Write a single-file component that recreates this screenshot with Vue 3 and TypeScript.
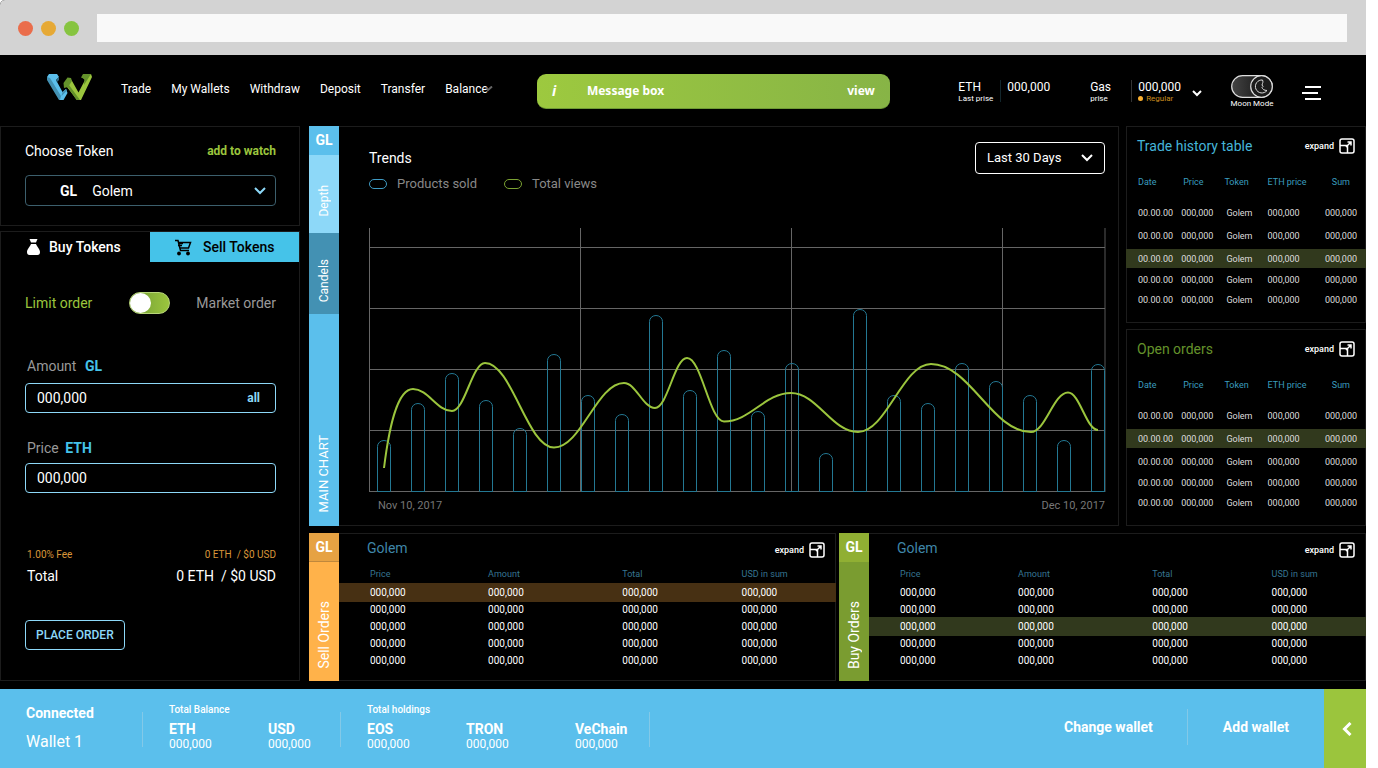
<script setup lang="ts">
import { computed, ref } from 'vue'

type Point = [number, number]

const links = ['Trade', 'My Wallets', 'Withdraw', 'Deposit', 'Transfer']
const moonMode = ref(true)
const marketOrder = ref(false)
const token = ref('Golem')
const period = ref('Last 30 Days')
const amount = ref('000,000')
const price = ref('000,000')

const barTops = [212, 175, 145, 172, 200, 126, 167, 186, 87, 162, 122, 183, 135, 225, 81, 167, 175, 135, 153, 167, 212, 136]
const barPath = (top: number, i: number): string => {
  const x = 8.5 + i * 34
  return `M${x} 263.5V${top + 6.5}A6.5 6 0 0 1 ${x + 13} ${top + 6.5}V263.5Z`
}
const gridX = [0.5, 211.5, 422.5, 633.5]
const gridY = [19.5, 80.5, 141.5, 202.5, 263.5]

const views: Point[] = [
  [44, 161], [83, 183], [116, 135], [185, 219.5], [255, 155], [286, 180], [318, 130],
  [355, 193.5], [422, 165], [489, 204], [562, 136], [662, 204], [699, 164.5], [729, 202],
]
const viewsPath = computed(() => {
  let d = 'M15 240C20 200 28 161 44 161'
  for (let i = 1; i < views.length; i++) {
    const [x0, y0] = views[i - 1]
    const [x1, y1] = views[i]
    const k = (x1 - x0) * 0.39
    d += `C${x0 + k} ${y0} ${x1 - k} ${y1} ${x1} ${y1}`
  }
  return d
})

const historyPanels = [
  { title: 'Trade history table', tone: 'cyan', active: 2 },
  { title: 'Open orders', tone: 'green', active: 1 },
]
const historyHeads = ['Date', 'Price', 'Token', 'ETH price', 'Sum']
const historyRow = ['00.00.00', '000,000', 'Golem', '000,000', '000,000']

const orderPanels = [
  { name: 'Sell Orders', kind: 'sell', active: 0 },
  { name: 'Buy Orders', kind: 'buy', active: 2 },
]
const orderHeads = ['Price', 'Amount', 'Total', 'USD in sum']
</script>

<template>
  <div class="app">
    <div class="chrome">
      <i class="dot red"></i><i class="dot amber"></i><i class="dot lime"></i>
      <input class="address" type="text" aria-label="Address" />
    </div>

    <header class="header">
      <a class="logo" href="#" aria-label="Home">
        <svg width="46" height="28" viewBox="0 0 46 28">
          <path d="M0 3L2 0H10L12 3L9 6L15.500 18L19 15L20.500 19L16.500 26H13Z" fill="#5bbfec" />
          <path d="M0 3L3 4L14 22L13 26H12L0 6ZM15.500 18L19 15L20 16.500L14.500 22Z" fill="#4391b3" />
          <path d="M9 6L12 3L12 6L10 8Z" fill="#2f6a85" />
          <path d="M20 13L24.500 6L31.500 18.500L38 6L36 4L44 0L45 3L34 26H30Z" fill="#9bc53d" />
          <path d="M16.500 9L20.500 3.500L24 4L25 7L21 13L17 14ZM20 12L22 11L33 26H29.500ZM34 3.500L36 0H44L37 11L37.500 5Z" fill="#64922b" />
        </svg>
      </a>
      <nav class="nav">
        <a v-for="l in links" :key="l" href="#">{{ l }}</a>
        <a class="balance" href="#">Balance<svg width="8" height="6" viewBox="0 0 8 6"><path d="M1 1.5L3 4L7 .5" /></svg></a>
      </nav>
      <div class="message">
        <span class="info">i</span>
        <span class="message-text">Message box</span>
        <button type="button">view</button>
      </div>
      <div class="status">
        <div class="quote first"><span>ETH</span><small>Last prise</small></div>
        <div class="quote value teal"><span>000,000</span></div>
        <div class="quote gas"><span>Gas</span><small>prise</small></div>
        <div class="quote value"><span>000,000</span><small class="regular"><i></i>Regular</small></div>
        <button class="more" type="button" aria-label="Gas options">
          <svg width="10" height="8" viewBox="0 0 10 8"><path d="M1 2L5 6L9 2" /></svg>
        </button>
        <label class="moon">
          <input v-model="moonMode" type="checkbox" />
          <svg width="42" height="23" viewBox="0 0 42 23">
            <defs><linearGradient id="moonTrack"><stop offset="0" stop-color="#444" /><stop offset="1" stop-color="#0a0a0a" /></linearGradient></defs>
            <rect x=".7" y=".7" width="40.6" height="21.6" rx="10.8" fill="url(#moonTrack)" stroke="#ddd" stroke-width="1.2" />
            <circle cx="30.5" cy="11.5" r="10.8" fill="#1c1c1c" stroke="#ddd" stroke-width="1.2" />
            <path d="M31.500 5A6.500 6.500 0 1 0 36 15.500C33 15.500 31.500 14 31 12.500L32 11.500L31 10C31.500 8 32.500 7 31.500 5Z" fill="none" stroke="#ddd" />
          </svg>
          <span>Moon Mode</span>
        </label>
        <button class="menu" type="button" aria-label="Menu">
          <svg width="20" height="16" viewBox="0 0 20 16"><path d="M3 2H19M0 8H16M3 14H19" /></svg>
        </button>
      </div>
    </header>

    <main class="main">
      <aside class="side">
        <section class="panel choose">
          <div class="row">
            <label for="token">Choose Token</label>
            <a class="watch" href="#">add to watch</a>
          </div>
          <div class="token-box">
            <b>GL</b>
            <select id="token" v-model="token"><option>Golem</option></select>
            <svg width="12" height="8" viewBox="0 0 12 8"><path d="M1 1L6 6L11 1" /></svg>
          </div>
        </section>

        <section class="panel trade">
          <div class="trade-tabs">
            <button type="button">
              <svg width="15" height="17" viewBox="0 0 15 17">
                <path d="M3.500 0H11.500L10 3.500H5Z" fill="#fff" />
                <path d="M5 5H10C11 8 14 10 14 13Q14 16 11.500 16H3.500Q1 16 1 13C1 10 4 8 5 5Z" fill="#fff" />
              </svg>Buy Tokens
            </button>
            <button class="sell-tab" type="button">
              <svg width="17" height="17" viewBox="0 0 17 17">
                <path d="M0 1.500H3L5.500 11.500H14M4 3.500H15.500L13.500 9H5.500M3 4.500H8M3 6.500H7" fill="none" stroke="#000" stroke-width="1.500" />
                <circle cx="4" cy="14.500" r="1.900" /><circle cx="13" cy="14.500" r="1.900" />
              </svg>Sell Tokens
            </button>
          </div>
          <div class="trade-body">
            <div class="row order-type">
              <span class="limit">Limit order</span>
              <label class="switch"><input v-model="marketOrder" type="checkbox" aria-label="Market order" /><i></i></label>
              <span class="market">Market order</span>
            </div>
            <label class="field-label" for="amount">Amount <b class="wide">GL</b></label>
            <div class="field">
              <input id="amount" v-model="amount" type="text" />
              <button type="button">all</button>
            </div>
            <label class="field-label second" for="price">Price <b>ETH</b></label>
            <div class="field"><input id="price" v-model="price" type="text" /></div>
            <div class="row fee"><span>1.00% Fee</span><span>0 ETH&nbsp; / $0 USD</span></div>
            <div class="row total"><span>Total</span><span>0 ETH&nbsp; / $0 USD</span></div>
            <button class="place" type="button">PLACE ORDER</button>
          </div>
        </section>
      </aside>

      <div class="content">
        <div class="upper">
          <section class="chart">
            <div class="strip">
              <b class="badge">GL</b>
              <button class="depth" type="button"><span>Depth</span></button>
              <button class="candels" type="button"><span>Candels</span></button>
              <button class="main-chart" type="button"><span>MAIN CHART</span></button>
            </div>
            <div class="chart-body">
              <div class="row chart-top">
                <div>
                  <h2>Trends</h2>
                  <div class="legend">
                    <span><i></i>Products sold</span>
                    <span class="views"><i></i>Total views</span>
                  </div>
                </div>
                <div class="period">
                  <select v-model="period" aria-label="Period"><option>Last 30 Days</option></select>
                  <svg width="12" height="8" viewBox="0 0 12 8"><path d="M1 1L6 6L11 1" /></svg>
                </div>
              </div>
              <svg class="plot" viewBox="0 0 737 264" role="img" aria-label="Trends chart">
                <path d="M736 0V264" stroke="#2b2b2b" stroke-width="2" />
                <g stroke="#666">
                  <path v-for="x in gridX" :key="'x' + x" :d="`M${x} 0V264`" />
                  <path v-for="y in gridY" :key="'y' + y" :d="`M0 ${y}H736`" />
                </g>
                <g fill="none" stroke="#237893">
                  <path v-for="(t, i) in barTops" :key="i" :d="barPath(t, i)" />
                </g>
                <path :d="viewsPath" fill="none" stroke="#9bc53d" stroke-width="2" />
              </svg>
              <div class="row dates"><span>Nov 10, 2017</span><span>Dec 10, 2017</span></div>
            </div>
          </section>

          <div class="history">
            <section v-for="p in historyPanels" :key="p.title" class="panel history-panel">
              <div class="row history-head">
                <h2 :class="p.tone">{{ p.title }}</h2>
                <button class="expand" type="button">expand
                  <svg width="16" height="16" viewBox="0 0 16 16"><rect x="1" y="1" width="14" height="14" rx="2" /><path d="M1 7.500H8.500V15M7 9L12 4M8.500 4H12V7.500" /></svg>
                </button>
              </div>
              <table class="history-table">
                <thead><tr><th v-for="h in historyHeads" :key="h">{{ h }}</th></tr></thead>
                <tbody>
                  <tr v-for="n in 5" :key="n" :class="{ active: n - 1 === p.active }">
                    <td v-for="(c, i) in historyRow" :key="i">{{ c }}</td>
                  </tr>
                </tbody>
              </table>
            </section>
          </div>
        </div>

        <div class="lower">
          <section v-for="p in orderPanels" :key="p.name" class="orders" :class="p.kind">
            <div class="strip">
              <b class="badge">GL</b>
              <div class="orders-name"><span>{{ p.name }}</span></div>
            </div>
            <div class="orders-body">
              <div class="row orders-head">
                <h2>Golem</h2>
                <button class="expand" type="button">expand
                  <svg width="16" height="16" viewBox="0 0 16 16"><rect x="1" y="1" width="14" height="14" rx="2" /><path d="M1 7.500H8.500V15M7 9L12 4M8.500 4H12V7.500" /></svg>
                </button>
              </div>
              <table class="orders-table">
                <thead><tr><th v-for="h in orderHeads" :key="h">{{ h }}</th></tr></thead>
                <tbody>
                  <tr v-for="n in 5" :key="n" :class="{ active: n - 1 === p.active }">
                    <td v-for="h in orderHeads" :key="h">000,000</td>
                  </tr>
                </tbody>
              </table>
            </div>
          </section>
        </div>
      </div>
    </main>

    <footer class="footer">
      <div class="wallet"><b>Connected</b><span>Wallet 1</span></div>
      <div class="sum balance-sum">
        <h3>Total Balance</h3>
        <dl>
          <div><dt>ETH</dt><dd>000,000</dd></div>
          <div><dt>USD</dt><dd>000,000</dd></div>
        </dl>
      </div>
      <div class="sum holdings">
        <h3>Total holdings</h3>
        <dl>
          <div><dt>EOS</dt><dd>000,000</dd></div>
          <div><dt>TRON</dt><dd>000,000</dd></div>
          <div><dt>VeChain</dt><dd>000,000</dd></div>
        </dl>
      </div>
      <div class="actions">
        <a href="#">Change wallet</a>
        <a href="#">Add wallet</a>
      </div>
      <button class="collapse" type="button" aria-label="Collapse">
        <svg width="10" height="14" viewBox="0 0 10 14"><path d="M8.500 1L2.500 7L8.500 13" /></svg>
      </button>
    </footer>
  </div>
</template>

<style>
body {
  margin: 0;
  background: #fff;
}
</style>

<style scoped>
* {
  box-sizing: border-box;
}
.app {
  display: flex;
  flex-direction: column;
  min-height: 100vh;
  margin-right: 12px;
  border-top-left-radius: 5px;
  background: #000;
  color: #fff;
  font-family: Roboto, "Liberation Sans", sans-serif;
  font-size: 14px;
  line-height: 16px;
}
button,
input,
select {
  margin: 0;
  padding: 0;
  border: 0;
  background: none;
  color: inherit;
  font: inherit;
  appearance: none;
}
button {
  cursor: pointer;
}
option {
  background: #000;
}
a {
  color: inherit;
  text-decoration: none;
}
h2,
h3,
dl,
dt,
dd {
  margin: 0;
  font-size: 14px;
  font-weight: 400;
}
svg {
  display: block;
  flex: none;
}
.row {
  display: flex;
  justify-content: space-between;
}
.panel {
  border: 1px solid #1c1c1c;
}

.chrome {
  display: flex;
  align-items: center;
  gap: 8px;
  padding: 14px 19px 13px 18px;
  background: #d3d3d3;
  border-top-left-radius: 5px;
}
.dot {
  width: 15px;
  height: 15px;
  border-radius: 50%;
}
.red { background: #ea6d4b; }
.amber { background: #e6a935; }
.lime { background: #86c440; }
.address {
  flex: 1;
  height: 28px;
  margin-left: 10px;
  padding: 0 10px;
  background: #f9f9f9;
  color: #333;
}

.header {
  display: flex;
  align-items: center;
  height: 71px;
  padding: 1px 44px 0 47px;
  font-size: 12px;
}
.logo {
  margin-bottom: 6px;
}
.nav {
  display: flex;
  gap: 20px;
  margin: 0 44px 4px 28px;
  white-space: nowrap;
}
.balance {
  display: flex;
  align-items: center;
}
.balance svg {
  margin-left: -3px;
  fill: none;
  stroke: #666;
  stroke-width: 2;
}
.message {
  display: flex;
  align-items: center;
  flex: 0 1 353px;
  height: 35px;
  padding: 0 15px;
  border-radius: 9px;
  border-bottom: 1px solid #6f9a35;
  background: linear-gradient(90deg, #9dc93f, #87b446);
  font-family: "Noto Sans", sans-serif;
  font-weight: 700;
}
.info {
  width: 35px;
  font-size: 14px;
  font-style: italic;
}
.message-text {
  flex: 1;
}
.status {
  display: flex;
  align-items: center;
  margin-left: auto;
}
.quote {
  display: flex;
  flex-direction: column;
  height: 22px;
}
.quote span {
  line-height: 14px;
}
.quote small {
  font-size: 8px;
  line-height: 9px;
}
.first {
  width: 42px;
  white-space: nowrap;
}
.gas {
  width: 41px;
  margin-left: 40px;
}
.value {
  padding-left: 6px;
  border-left: 1px solid #333;
}
.teal {
  border-color: #12262c;
}
.regular {
  display: flex;
  align-items: center;
  gap: 3px;
  color: #c98c1f;
}
.regular i {
  width: 5px;
  height: 5px;
  border-radius: 50%;
  background: #fbb030;
}
.more {
  margin: 3px 0 0 11px;
}
.more svg,
.menu svg,
.period svg,
.collapse svg {
  fill: none;
  stroke: #fff;
  stroke-width: 2;
}
.moon {
  display: flex;
  flex-direction: column;
  align-items: center;
  width: 44px;
  margin: 2px 0 0 28px;
  font-size: 8px;
  line-height: 12px;
  white-space: nowrap;
}
.moon input,
.switch input {
  position: absolute;
  opacity: 0;
}
.menu {
  margin: 4px 0 0 28px;
}

.main {
  display: flex;
  flex: 1;
  gap: 9px;
  padding-bottom: 8px;
}
.side {
  display: flex;
  flex-direction: column;
  flex: 0 0 300px;
  gap: 5px;
}
.choose {
  padding: 16px 23px 19px 24px;
}
.watch {
  color: #9bc53d;
  font-size: 12px;
  font-weight: 700;
}
.token-box {
  display: flex;
  align-items: center;
  height: 31px;
  margin-top: 16px;
  padding: 0 9px 0 34px;
  border: 1px solid #3c5f6d;
  border-radius: 4px;
}
.token-box select {
  flex: 1;
  margin-left: 15px;
  height: 28px;
}
.token-box svg {
  fill: none;
  stroke: #8dd8f8;
  stroke-width: 2;
}
.trade {
  flex: 1;
}
.trade-tabs {
  display: flex;
}
.trade-tabs button {
  display: flex;
  align-items: center;
  flex: 1;
  gap: 8px;
  height: 30px;
  padding-left: 25px;
  font-weight: 500;
}
.trade-tabs .sell-tab {
  gap: 11px;
  background: #45c3e9;
  color: #000;
}
.trade-body {
  padding: 30px 23px 30px 24px;
}
.order-type {
  align-items: center;
}
.limit {
  color: #9bc53d;
}
.market,
.field-label {
  color: #999;
}
.switch {
  width: 41px;
  height: 22px;
  margin-left: 11px;
  border: 1px solid #b8d67a;
  border-radius: 11px;
  background: linear-gradient(90deg, #6f9a35, #9bc53d);
}
.switch i {
  display: block;
  width: 21px;
  height: 20px;
  border-radius: 50%;
  background: #fff;
}
.field-label {
  display: block;
  margin: 44px 0 9px 2px;
}
.field-label.second {
  margin: 27px 0 7px 2px;
}
.field-label b {
  margin-left: 3px;
  color: #45c3e9;
}
.field-label .wide {
  margin-left: 5px;
}
.field {
  display: flex;
  height: 30px;
  padding: 0 15px 0 11px;
  border: 1px solid #8dd8f8;
  border-radius: 4px;
}
.field input {
  flex: 1;
  min-width: 0;
}
.field button {
  color: #8dd8f8;
  font-size: 12px;
  font-weight: 700;
}
.fee {
  margin: 54px 0 0 2px;
  color: #d9963a;
  font-size: 10px;
}
.total {
  margin: 5px 0 0 2px;
}
.place {
  display: block;
  height: 30px;
  margin-top: 36px;
  padding: 0 10px;
  border: 1px solid #8dd8f8;
  border-radius: 4px;
  color: #8dd8f8;
  font-size: 12px;
  font-weight: 500;
}

.content {
  display: flex;
  flex-direction: column;
  flex: 1;
  gap: 7px;
  min-width: 0;
}
.upper {
  display: flex;
  flex: 1;
  gap: 7px;
}
.chart {
  display: flex;
  flex: 1;
  min-width: 0;
}
.strip {
  display: flex;
  flex-direction: column;
  flex: 0 0 30px;
}
.badge {
  height: 29px;
  line-height: 29px;
  background: #5bbfec;
  text-align: center;
}
.strip button,
.orders-name {
  display: flex;
  align-items: flex-end;
  justify-content: center;
}
.strip span {
  writing-mode: vertical-rl;
  transform: rotate(180deg);
  white-space: nowrap;
}
.depth {
  padding: 30px 0 16px;
  background: #8dd8f8;
  font-size: 12px;
}
.candels {
  padding: 26px 0 12px;
  background: #4391b3;
  font-size: 12px;
}
.main-chart {
  flex: 1;
  padding-bottom: 13px;
  background: #5bbfec;
  font-size: 13px;
}
.chart-body {
  flex: 1;
  padding: 15px 12px 11px 30px;
  border: 1px solid #1c1c1c;
  border-left: 0;
}
.chart-top {
  padding-right: 1px;
}
.chart-top h2 {
  margin-top: 8px;
}
.legend {
  display: flex;
  gap: 27px;
  margin-top: 10px;
  color: #888;
  font-size: 13px;
}
.legend span {
  display: flex;
  align-items: center;
  gap: 10px;
}
.legend i {
  width: 18px;
  height: 10px;
  border: 1px solid #3f9bc4;
  border-radius: 5px;
}
.legend .views i {
  border-color: #7ba232;
}
.period {
  display: flex;
  align-items: center;
  width: 130px;
  height: 32px;
  padding: 0 11px;
  border: 1px solid #fff;
  border-radius: 4px;
  font-size: 13px;
}
.period select {
  flex: 1;
  height: 28px;
}
.plot {
  width: 100%;
  height: auto;
  margin-top: 36px;
}
.dates {
  padding: 6px 1px 0 9px;
  color: #777;
  font-size: 11px;
}

.history {
  display: flex;
  flex-direction: column;
  flex: 0 0 240px;
  gap: 6px;
}
.history-panel {
  flex: 1;
  padding-top: 11px;
}
.history-head {
  align-items: center;
  padding: 0 10px;
}
.cyan { color: #45b5d9; }
.green { color: #64922b; }
.expand {
  display: flex;
  align-items: center;
  gap: 5px;
  font-size: 9px;
  font-weight: 500;
}
.expand svg {
  fill: none;
  stroke: #fff;
  stroke-width: 1.5;
}
table {
  border-spacing: 0;
  table-layout: fixed;
}
th,
td {
  padding: 0;
  text-align: left;
  font-weight: 400;
  white-space: nowrap;
}
.history-table {
  width: calc(100% + 2px);
  margin: 18px -1px 0;
  color: #ddd;
  font-size: 9px;
  line-height: 12px;
}
.history-table th {
  height: 29px;
  padding-bottom: 10px;
  color: #3a9cbf;
}
.history-table th:first-child,
.history-table td:first-child {
  width: 23%;
  padding-left: 12px;
}
.history-table th:nth-child(2) { width: 18%; padding-left: 2px; }
.history-table th:nth-child(3) { width: 18%; }
.history-table th:nth-child(4) { width: 20%; }
.history-table td:nth-child(3) { padding-left: 2px; }
.history-table th:last-child,
.history-table td:last-child {
  padding-right: 9px;
  text-align: right;
}
.history-table th:last-child {
  padding-right: 16px;
}
.history-table tbody td {
  height: 20px;
}
.history-table tbody tr:nth-child(-n + 3) td {
  height: 23px;
}
.history-table .active td {
  border-top: 2px solid transparent;
  border-bottom: 2px solid transparent;
  background: #31391d;
  background-clip: padding-box;
}

.lower {
  display: grid;
  grid-template-columns: 1fr 1fr;
  gap: 3px;
}
.orders {
  display: flex;
}
.orders .strip {
  font-size: 14px;
}
.orders-name {
  flex: 1;
  padding-bottom: 12px;
}
.sell .badge {
  background: #e6a243;
  border-bottom: 1px solid #bf883c;
}
.sell .orders-name { background: #ffb24a; }
.buy .badge { background: #90af33; }
.buy .orders-name { background: #7a9c30; }
.orders-body {
  flex: 1;
  padding: 6px 0 11px;
  border: 1px solid #1c1c1c;
  border-left: 0;
}
.orders-head {
  padding: 0 10px 0 28px;
}
.orders-head h2 {
  color: #3f86a8;
}
.orders-head .expand {
  margin-top: 2px;
}
.orders-table {
  width: calc(100% + 1px);
  margin-top: 8px;
  font-size: 10px;
  line-height: 14px;
}
.orders-table th,
.orders-table td {
  width: 27%;
  height: 17px;
}
.orders-table th {
  height: 18px;
  padding-bottom: 2px;
  color: #367590;
  font-size: 9px;
}
.orders-table th:first-child,
.orders-table td:first-child {
  width: 30%;
  padding-left: 31px;
}
.orders-table th:nth-child(3) { width: 24%; }
.orders-table th:nth-child(4) { width: 19%; }
.sell .active {
  background: #473013;
  box-shadow: 0 -1px 0 #473013, 0 1px 0 #473013;
}
.buy .active {
  background: #31391d;
  box-shadow: 0 -1px 0 #31391d, 0 1px 0 #31391d;
}

.footer {
  display: flex;
  align-items: center;
  height: 79px;
  padding-left: 26px;
  background: #5bbfec;
  white-space: nowrap;
}
.wallet,
.sum,
.actions {
  margin-bottom: 3px;
}
.wallet {
  display: flex;
  flex-direction: column;
  gap: 13px;
  width: 116px;
}
.wallet span {
  font-size: 16px;
}
.sum {
  position: relative;
  padding-left: 27px;
}
.sum::before,
.holdings::after,
.actions a + a::before {
  content: "";
  position: absolute;
  top: 8px;
  bottom: 4px;
  left: 0;
  width: 1px;
  background: #83c9e8;
}
.holdings::after {
  right: 0;
  left: auto;
}
.sum h3 {
  font-size: 10px;
  font-weight: 500;
  line-height: 12px;
}
.sum dl {
  display: flex;
  margin-top: 5px;
}
.sum dl div {
  width: 99px;
}
.sum dt,
.wallet b,
.actions a {
  font-weight: 700;
}
.sum dd {
  font-size: 12px;
  line-height: 14px;
}
.balance-sum dl div:last-child {
  width: 72px;
}
.holdings dl div:nth-child(2) {
  width: 109px;
}
.holdings dl div:last-child {
  width: 75px;
}
.actions {
  display: flex;
  gap: 70px;
  margin-left: auto;
}
.actions a {
  position: relative;
}
.actions a + a::before {
  top: -10px;
  bottom: -10px;
  left: -36px;
}
.collapse {
  display: flex;
  align-items: center;
  justify-content: center;
  align-self: stretch;
  width: 42px;
  margin-left: 35px;
  padding-left: 4px;
  background: #9bc53d;
}
.collapse svg {
  stroke-width: 3;
}
</style>
